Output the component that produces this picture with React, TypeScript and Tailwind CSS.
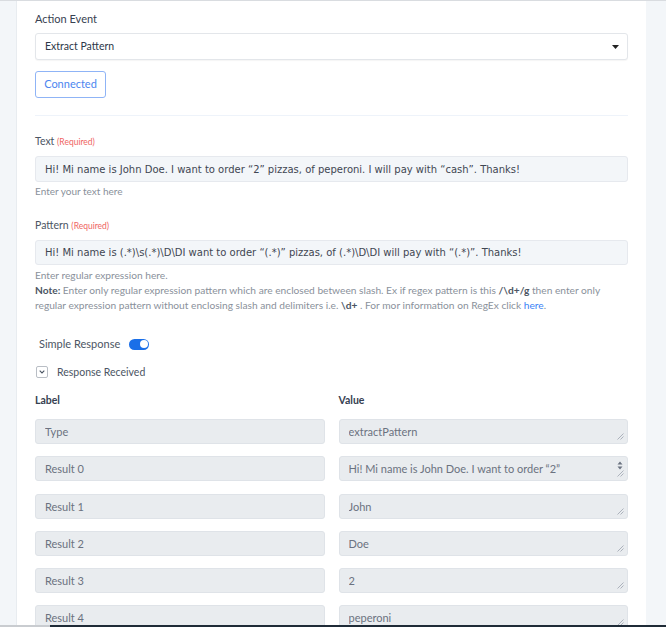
import React from "react";

const sans = { fontFamily: "Lato, 'Open Sans', sans-serif" };
const mono = { fontFamily: "'DejaVu Sans', Verdana, sans-serif" };

function ResizeGrip() {
  return (
    <svg className="absolute bottom-[3px] right-[3px]" width="7" height="7" viewBox="0 0 7 7">
      <path d="M6.5 0.5 L0.5 6.5 M6.5 3.5 L3.5 6.5" stroke="#9ca3af" strokeWidth="0.8" fill="none" />
    </svg>
  );
}

function ReadBox({ text, area, scroll }: { text: string; area?: boolean; scroll?: boolean }) {
  return (
    <div
      className={
        "relative h-[25px] overflow-hidden rounded-[3px] border border-[#dfe3e8] bg-[#e9ecef] pl-[9px] text-[11px] leading-[16px] text-[#6b7280] " +
        (scroll ? "pr-[44px]" : "pr-[20px]")
      }
    >
      <div className={scroll ? "pt-[4px]" : "pt-[4px] truncate"}>{text}</div>
      {scroll && (
        <svg className="absolute right-[4px] top-[4px]" width="6" height="9" viewBox="0 0 6 9">
          <path d="M3 0.5 L5.5 3.5 H0.5 Z M3 8.5 L5.5 5.5 H0.5 Z" fill="#6b7280" />
        </svg>
      )}
      {area && <ResizeGrip />}
    </div>
  );
}

export default function App() {
  const rows = [
    ["Type", "extractPattern"],
    ["Result 0", "Hi! Mi name is John Doe. I want to order \u201c2\u201d pizzas, of peperoni. I will pay with \u201ccash\u201d. Thanks!"],
    ["Result 1", "John"],
    ["Result 2", "Doe"],
    ["Result 3", "2"],
    ["Result 4", "peperoni"],
  ];

  return (
    <div className="flex h-[627px] w-[666px] flex-col overflow-hidden bg-[#f3f6f9]" style={sans}>
      <div className="h-px w-full bg-[#d9dce0]" />
      <div className="flex min-h-0 flex-1 overflow-hidden">
        <div className="w-[17px] border-r border-[#e8ecf0] bg-[#f3f6f9]" />
        <div className="w-[629px] bg-white px-[18px]">
          {/* Action event */}
          <div className="mt-[10px] text-[11px] leading-[16px] text-[#374151]">Action Event</div>
          <div className="mt-[6px] flex h-[27px] items-center justify-between rounded-[3px] border border-[#e3e6ea] bg-white pl-[9px] pr-[8px] text-[10.5px] text-[#2d3748] shadow-[0_1px_1px_rgba(0,0,0,0.04)]">
            <span>Extract Pattern</span>
            <svg width="7" height="4" viewBox="0 0 7 4">
              <path d="M0 0 H7 L3.5 4 Z" fill="#222" />
            </svg>
          </div>
          <button className="mt-[11px] h-[27px] w-[71px] rounded-[3px] border border-[#8fb4f6] bg-white text-[11px] text-[#4b86ef]">
            Connected
          </button>
          <div className="mt-[17px] border-t border-[#eef3fa]" />

          {/* Text */}
          <div className="mt-[17px] text-[10.5px] leading-[16px] text-[#4b5563]">
            Text <span className="text-[8.5px] text-[#ef6461]">(Required)</span>
          </div>
          <div className="mt-[6px] flex h-[26px] items-center rounded-[3px] border border-[#e6e9ee] bg-[#f3f6f9] pl-[9px] text-[10px] text-[#3f4652]" style={mono}>
            Hi! Mi name is John Doe. I want to order “2” pizzas, of peperoni. I will pay with “cash”. Thanks!
          </div>
          <div className="mt-[1px] text-[10px] leading-[16px] text-[#8a919b]">Enter your text here</div>

          {/* Pattern */}
          <div className="mt-[18px] text-[10.5px] leading-[16px] text-[#4b5563]">
            Pattern <span className="text-[8.5px] text-[#ef6461]">(Required)</span>
          </div>
          <div className="mt-[6px] flex h-[25px] items-center rounded-[3px] border border-[#e6e9ee] bg-[#f3f6f9] pl-[9px] text-[10px] text-[#3f4652]" style={mono}>
            Hi! Mi name is (.*)\s(.*)\D\DI want to order “(.*)” pizzas, of (.*)\D\DI will pay with “(.*)”. Thanks!
          </div>
          <div className="mt-[2px] text-[10.2px] leading-[16px] text-[#8a919b]">Enter regular expression here.</div>
          <div className="text-[10.2px] leading-[14.5px] text-[#8a919b]">
            <span className="font-bold text-[#4b5563]">Note:</span> Enter only regular expression pattern which are enclosed between slash. Ex if regex pattern is this{" "}
            <span className="font-bold text-[#4b5563]">/\d+/g</span> then enter only regular expression pattern without enclosing slash and delimiters i.e.{" "}
            <span className="font-bold text-[#4b5563]">\d+</span> . For mor information on RegEx click <span className="text-[#3b82f6]">here</span>.
          </div>

          {/* Simple response */}
          <div className="mt-[24px] flex items-center gap-[9px] pl-[4px] text-[11px] leading-[16px] text-[#4b5563]">
            <span>Simple Response</span>
            <span className="flex h-[11px] w-[20px] items-center justify-end rounded-full bg-[#1a6fe8] pr-[1.5px]">
              <span className="h-[8px] w-[8px] rounded-full bg-white" />
            </span>
          </div>
          <div className="mt-[12px] flex items-center gap-[9px] text-[10.5px] leading-[16px] text-[#4b5563]">
            <span className="ml-[1px] flex h-[12px] w-[12px] items-center justify-center rounded-[2px] border border-[#b9bec5] bg-white">
              <svg width="6" height="4" viewBox="0 0 6 4">
                <path d="M0.7 0.7 L3 3 L5.3 0.7" stroke="#4b5563" strokeWidth="1.1" fill="none" />
              </svg>
            </span>
            <span>Response Received</span>
          </div>

          {/* Table */}
          <div className="mt-[12px] grid grid-cols-2 gap-x-[14px] text-[10.5px] font-bold leading-[16px] text-[#374151]">
            <div>Label</div>
            <div>Value</div>
          </div>
          <div className="mt-[11px] grid grid-cols-2 gap-x-[14px] gap-y-[12.3px]">
            {rows.map(([label, value], i) => (
              <React.Fragment key={label}>
                <ReadBox text={label} />
                <ReadBox text={value} area scroll={i === 1} />
              </React.Fragment>
            ))}
          </div>
        </div>
        <div className="flex-1 bg-[#f3f6f9]" />
      </div>
      <div className="flex h-[2px] w-full">
        <div className="w-[50px] bg-[#c9ccd0]" />
        <div className="flex-1 bg-[#1f2b37]" />
      </div>
    </div>
  );
}
